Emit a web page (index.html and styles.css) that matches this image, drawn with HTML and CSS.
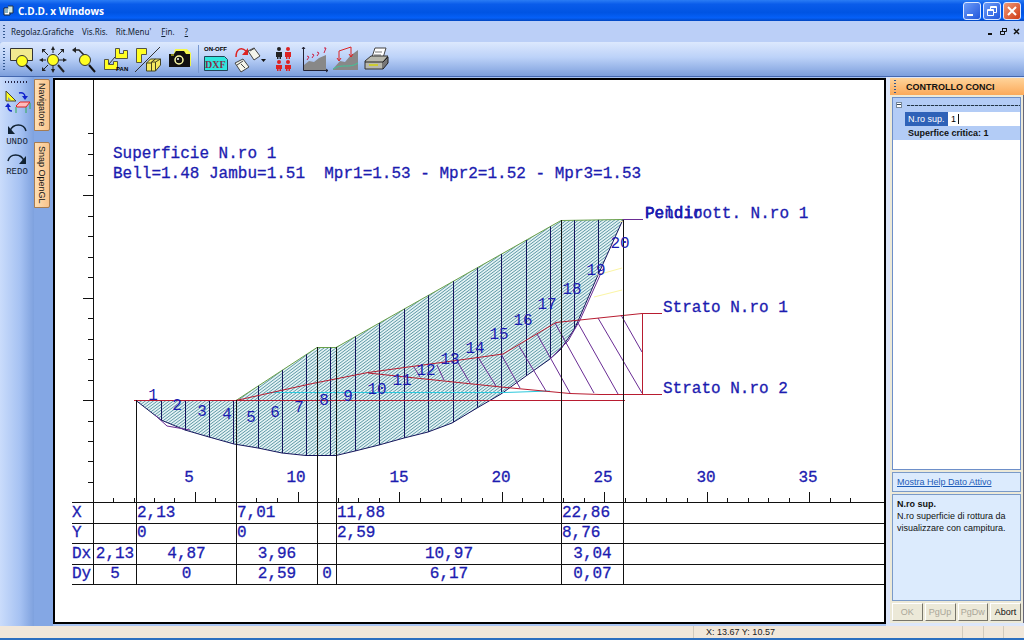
FILE: index.html
```html
<!DOCTYPE html>
<html lang="it">
<head>
<meta charset="utf-8">
<title>C.D.D. x Windows</title>
<link rel="stylesheet" href="styles.css">
</head>
<body>
<div class="app">
  <header class="titlebar">
    <svg class="app-icon" width="11" height="12" viewBox="0 0 11 12"><path d="M1 3h6v7H1z" fill="#fff" stroke="#123"/><path d="M5 1h5v7H6" fill="#cfe8e0" stroke="#234"/><path d="M2 5h3M2 7h3" stroke="#168"/></svg>
    <h1 class="title">C.D.D. x Windows</h1>
    <div class="window-buttons">
      <button class="win" aria-label="Riduci a icona"><svg width="16" height="16"><path d="M3 11h6v2H3z" fill="#fff"/></svg></button>
      <button class="win" aria-label="Ripristina"><svg width="16" height="16" fill="none" stroke="#fff"><path d="M6.500 6V3.500h6v6H10M6 4.500h6"/><path d="M3.500 6.500h6v6h-6zM3 7.500h6"/></svg></button>
      <button class="win close" aria-label="Chiudi"><svg width="16" height="16"><path d="M4 4l8 8M12 4l-8 8" stroke="#fff" stroke-width="2"/></svg></button>
    </div>
  </header>

  <nav class="menubar">
    <span class="grip"></span>
    <button class="menu">Regolaz.Grafiche</button>
    <button class="menu">Vis.Ris.</button>
    <button class="menu">Rit.Menu'</button>
    <button class="menu menu-wide"><u>F</u>in.</button>
    <button class="menu menu-wide"><u>?</u></button>
    <div class="mdi-buttons">
      <button class="mdi" aria-label="Riduci finestra"><svg width="9" height="9"><path d="M2 7h4" stroke="#111" stroke-width="2"/></svg></button>
      <button class="mdi" aria-label="Ripristina finestra"><svg width="9" height="9" fill="none" stroke="#111"><path d="M3.500 4V1.500h4v3H6M3 1.500h5M1.500 4.500h4v3h-4zM1 4.500h5"/></svg></button>
      <button class="mdi" aria-label="Chiudi finestra"><svg width="9" height="9"><path d="M2 2l5 5M7 2L2 7" stroke="#111" stroke-width="1.500"/></svg></button>
    </div>
  </nav>

  <div class="toolbar">
    <span class="grip"></span>
    <button class="tool" aria-label="Zoom finestra"><svg width="28" height="28" viewBox="0 0 28 28"><path d="M2.500 3.500h22v12h-22z" fill="#f2ea90" stroke="#333"/><path d="M18 20l6 6" stroke="#111" stroke-width="2"/><circle cx="14" cy="16" r="5.500" fill="#ff2" stroke="#333"/></svg></button>
    <button class="tool" aria-label="Zoom tutto"><svg width="28" height="28" viewBox="0 0 28 28"><g stroke="#222"><path d="M14 8V3M14 20v6M7 15H2M20 15h6M9 10L5 6M19 10l4-4M9 20l-4 4" fill="none"/><path d="M19 20l6 7" stroke-width="2"/></g><g fill="#222"><path d="M12 5l2-4 2 4zM12 24h4l-2 4zM4 13v4l-4-2zM24 13v4l4-2zM3 4h4l-4 4zM25 4h-4l4 4zM3 26v-4l4 4z"/></g><circle cx="14" cy="15" r="5.500" fill="#ff2" stroke="#333"/></svg></button>
    <button class="tool" aria-label="Zoom precedente"><svg width="28" height="28" viewBox="0 0 28 28"><path d="M5 5h4l5 5" fill="none" stroke="#222" stroke-width="1.500"/><path d="M6 2v6L2 5z" fill="#222"/><path d="M19 20l6 7" stroke="#111" stroke-width="2"/><circle cx="15" cy="15" r="5.500" fill="#ff2" stroke="#333"/></svg></button>
    <button class="tool" aria-label="Pan"><svg width="28" height="28" viewBox="0 0 28 28"><path d="M14.500 3.500h4v5h4v-3h4v8h-12zM3.500 14.500h4v5h5v-3h4v8h-13z" fill="#ff2" stroke="#554"/><path d="M8 19l6-7" stroke="#333"/><text class="pan-text" x="15" y="26">PAN</text></svg></button>
    <button class="tool tool-wide" aria-label="Pianta e assonometria"><svg width="30" height="28" viewBox="0 0 30 28"><path d="M4.500 3.500h10v6h-5v8h-5z" fill="#ff2" stroke="#554"/><path d="M3 27L28 2" stroke="#333"/><path d="M14.500 18l4-4h10v6l-5 6h-9zM14.500 18h5v8M19 18l4-4M23.500 26v-9h-4l4-3M23.500 17l5-3" fill="#f5ea60" stroke="#442"/></svg></button>
    <button class="tool tool-wide" aria-label="Fotografia"><svg width="28" height="28" viewBox="0 0 28 28"><path d="M9 4h12l4 4v13H5" fill="#ff2" opacity=".8"/><path d="M3 9h5l2-3h8l2 3h4v13H3z" fill="#111"/><circle cx="13" cy="15" r="4" fill="#111" stroke="#ffa" stroke-width="1.500"/><circle cx="12" cy="14" r="1" fill="#fff"/><path d="M5 10h3" stroke="#ff2"/></svg></button>
    <span class="separator"></span>
    <button class="tool" aria-label="DXF on-off"><svg width="28" height="30" viewBox="0 0 28 30"><text class="onoff-text" x="2" y="7">ON-OFF</text><path d="M2.500 12.500h20l3 3v11h-23z" fill="#2fe6dc" stroke="#245"/><text class="dxf-text" x="3" y="24">DXF</text></svg></button>
    <button class="tool tool-turn" aria-label="Ruota fogli"><svg width="34" height="28" viewBox="0 0 34 28"><path d="M3 12C3 3 9 2 13 6" fill="none" stroke="#d22" stroke-width="1.500"/><path d="M15 3v7H9z" fill="#d22"/><g fill="#f4f4ea" stroke="#444"><path d="M15 6l6-3 6 8-6 4z"/><path d="M17 6l5-3"/><path d="M2 18l8-4 6 8-8 5z"/><path d="M4 20l6-4M8 19l4 4"/></g><path d="M28 14h5l-2.500 3z" fill="#111"/></svg></button>
    <button class="tool" aria-label="Verifiche"><svg width="28" height="28" viewBox="0 0 28 28"><g fill="#222"><circle cx="9" cy="4" r="2"/><path d="M6 7h6v5h-1v2H9.500v-2h-1v2H7v-2H6z"/></g><g fill="#d22"><circle cx="18" cy="4" r="2"/><path d="M15 7h6v5h-1v2h-1.500v-2h-1v2H16v-2h-1z"/><circle cx="9" cy="17" r="2"/><path d="M6 20h6v4h-1v2H9.500v-2h-1v2H7v-2H6z"/><circle cx="18" cy="17" r="2"/><path d="M15 20h6v4h-1v2h-1.500v-2h-1v2H16v-2h-1z"/></g></svg></button>
    <button class="tool" aria-label="Profilo"><svg width="28" height="28" viewBox="0 0 28 28"><path d="M3 20l5-4 5 1 5-4 7-3v16H3z" fill="#888"/><path d="M2.500 2v23.500H27M1 4l1.500-2L4 4M25 24l2 1.500-2 1.500" fill="none" stroke="#223"/><path d="M6 11l2 1-2 3M11 9l2 1-2 3M16 7l2 1-2 3M23 3h2l-2 5" fill="none" stroke="#c24"/></svg></button>
    <button class="tool" aria-label="Superfici"><svg width="28" height="28" viewBox="0 0 28 28"><path d="M1 24l7-8 5 1 5-6 8-6v20H1z" fill="#888"/><path d="M1 24c9-6 16 0 25-6" fill="none" stroke="#3cc79a"/><path d="M7 15V6l12-4v10M5 13l2 3 2-3M17 9l2 3 2-3" fill="none" stroke="#d22"/></svg></button>
    <button class="tool" aria-label="Stampa"><svg width="28" height="28" viewBox="0 0 28 28"><path d="M9 12l3-9h11l-3 10z" fill="#fff" stroke="#444"/><path d="M12 7h7M11 10h7" stroke="#777"/><path d="M2 16l6-5h17l-5 6v7H2z" fill="#b8b8ae" stroke="#333"/><path d="M20 17l5-5v6l-5 6M2 17h18" fill="#777" stroke="#222"/><path d="M6 20h9" stroke="#cc3" stroke-width="2"/></svg></button>
  </div>

  <main class="work">
    <aside class="sidebar">
      <span class="grip-h"></span>
      <button class="side" aria-label="Disegno e tavolo"><svg width="28" height="28" viewBox="0 0 28 28"><path d="M3 2v10h10z" fill="#ff2" stroke="#443"/><path d="M5 8v3h3z" fill="#89a"/><path d="M16 4c4-1 6 1 6 4M9 22c-3 0-4-2-4-5" fill="none" stroke="#12c" stroke-width="1.500"/><path d="M19 7h6l-3 4zM2 18h6l-3-4z" fill="#12c"/><path d="M13 18v6M23 18v6M27 14v6" stroke="#3a5"/><path d="M13 17l4-4h10l-4 5h-9z" fill="#fbb" stroke="#d22"/></svg></button>
      <button class="side"><svg width="24" height="12" viewBox="0 0 24 12"><path d="M5 8c3-8 14-8 16 0" fill="none" stroke="#123" stroke-width="1.500"/><path d="M3 3v8h7z" fill="#123"/></svg><span>UNDO</span></button>
      <button class="side"><svg width="24" height="12" viewBox="0 0 24 12"><path d="M3 8c2-8 13-8 16 0" fill="none" stroke="#123" stroke-width="1.500"/><path d="M21 3v8h-7z" fill="#123"/></svg><span>REDO</span></button>
    </aside>
    <div class="tabs">
      <button class="tab tab-short">Navigatore</button>
      <button class="tab">Snap OpenGL</button>
    </div>

    <section class="canvas">
      <svg class="plot" role="img" aria-label="Sezione del pendio">
        <defs>
          <pattern id="hatch" width="4" height="3" patternUnits="userSpaceOnUse"><path d="M0 0h4v3H0z" fill="#e4f2f5"/><path d="M-1 3.750L5 -.750M-1 .750L1 -.750M3 3.750L5 2.250" stroke="#5c98a4"/></pattern>
          <clipPath id="mass"><path d="M136 400.500H236L317 347.500H336L561 220.500L623 219.500L598 275L575 328L561 349L550 359L526 376L501 394L477 408L452 423L428 432L404 438L379 445L355 451L336 455L306 455L282 453L258 448L234 444L209 437L185 430L161 420Z"/></clipPath>
        </defs>
        <g transform="translate(-55 -80)" fill="none">
          <path class="black" d="M93.500 80V502"/>
          <path class="black" d="M88 133.500h5M88 154.500h5M88 175.500h5M83 195.500h10M88 216.500h5M88 236.500h5M88 257.500h5M88 277.500h5M83 298.500h10M88 318.500h5M88 339.500h5M88 359.500h5M88 380.500h5M83 400.500h10M88 421.500h5M88 441.500h5M88 461.500h5M88 482.500h5"/>
          <path class="black" d="M113.500 502v-4M134.500 502v-4M154.500 502v-4M174.500 502v-4M195.500 502v-10M215.500 502v-4M256.500 502v-4M277.500 502v-4M298.500 502v-10M338.500 502v-4M358.500 502v-4M379.500 502v-4M399.500 502v-10M420.500 502v-4M441.500 502v-4M461.500 502v-4M482.500 502v-4M502.500 502v-10M522.500 502v-4M543.500 502v-4M563.500 502v-4M584.500 502v-4M604.500 502v-10M625.500 502v-4M646.500 502v-4M666.500 502v-4M687.500 502v-4M707.500 502v-10M727.500 502v-4M748.500 502v-4M768.500 502v-4M789.500 502v-4M809.500 502v-10M830.500 502v-4M850.500 502v-4"/>
          <path d="M136 400.500H236L317 347.500H336L561 220.500L623 219.500L598 275L575 328L561 349L550 359L526 376L501 394L477 408L452 423L428 432L404 438L379 445L355 451L336 455L306 455L282 453L258 448L234 444L209 437L185 430L161 420Z" fill="url(#hatch)"/>
          <path class="green" d="M236 400.500L317 347.500H336L561 220.500L623 219.500"/>
          <path class="navy" d="M623 219.500L598 275L575 328L561 349L550 359L526 376L501 394L477 408L452 423L428 432L404 438L379 445L355 451L336 455.500H306L282 453L258 448L234 444L209 437L185 430L161 420L136 400.500"/>
          <path class="violet" d="M155 415L167 426L190 430M550 359L568 341L580 320L601 273"/>
          <path class="navy" clip-path="url(#mass)" d="M161.500 200V460M185.500 200V460M209.500 200V460M233.500 200V460M258.500 200V460M282.500 200V460M306.500 200V460M330.500 200V460M355.500 200V460M379.500 200V460M404.500 200V460M428.500 200V460M453.500 200V460M477.500 200V460M501.500 200V460M526.500 200V460M550.500 200V460M574.500 200V460M598.500 200V460"/>
          <path class="cyan" d="M267 392.500H505L550 391"/>
          <path class="yellow" d="M597 275L622 268M594 297L622 290M620 222l3-1"/>
          <path class="violet" d="M598 318L642 393M621 315L642 352M578 323L618 394M555 323L594 393M537 334L570 393M519 346L546 391M501 354L520 388M478 357L496 386M457 361L470 383M437 365L444 380M414 367L420 377"/>
          <path class="red" d="M134 400.500H625"/>
          <path class="red" d="M236 400.500L310 384L368 372.500L478 357.500L503 354L556 322.500L642 313.500H662M642.500 313V395M368 373L501 387L570 393.500L600 394.500H662"/>
          <path class="black" d="M136.500 400V502M236.500 400V502M317.500 347V502M336.500 347V502M561.500 220V502M623.500 219V502"/>
          <path class="violet" d="M623 219.500H643"/>
          <g class="label strong">
            <text x="113" y="158">Superficie N.ro 1</text>
            <text x="113" y="178" xml:space="preserve">Bell=1.48 Jambu=1.51  Mpr1=1.53 - Mpr2=1.52 - Mpr3=1.53</text>
            <text x="645" y="218">Pendio</text>
            <text x="645" y="218">Peldirott. N.ro 1</text>
            <text x="663" y="312">Strato N.ro 1</text>
            <text x="663" y="393">Strato N.ro 2</text>
          </g>
          <g class="label centered strong">
            <text x="189" y="482">5</text><text x="296" y="482">10</text><text x="399" y="482">15</text><text x="501" y="482">20</text><text x="603" y="482">25</text><text x="706" y="482">30</text><text x="808" y="482">35</text>
          </g>
          <g class="label centered">
            <text x="153" y="400">1</text><text x="177" y="410">2</text><text x="202" y="416">3</text><text x="227" y="419">4</text><text x="251" y="422">5</text><text x="275" y="417">6</text><text x="299" y="412">7</text><text x="324" y="405">8</text><text x="348" y="401">9</text><text x="377" y="394">10</text><text x="402" y="385">11</text><text x="426" y="375">12</text><text x="450" y="364">13</text><text x="475" y="353">14</text><text x="499" y="339">15</text><text x="523" y="325">16</text><text x="547" y="309">17</text><text x="572" y="294">18</text><text x="596" y="275">19</text><text x="620" y="248">20</text>
          </g>
        </g>
      </svg>
      <table class="data">
        <colgroup><col class="c-head"><col class="c-a"><col class="c-b"><col class="c-c"><col class="c-d"><col class="c-e"><col class="c-f"><col></colgroup>
        <tbody>
          <tr class="tall"><th scope="row">X</th><td></td><td>2,13</td><td>7,01</td><td></td><td>11,88</td><td>22,86</td><td></td></tr>
          <tr><th scope="row">Y</th><td></td><td>0</td><td>0</td><td></td><td>2,59</td><td>8,76</td><td></td></tr>
          <tr class="tall delta"><th scope="row">Dx</th><td>2,13</td><td>4,87</td><td>3,96</td><td></td><td>10,97</td><td>3,04</td><td></td></tr>
          <tr class="delta"><th scope="row">Dy</th><td>5</td><td>0</td><td>2,59</td><td>0</td><td>6,17</td><td>0,07</td><td></td></tr>
        </tbody>
      </table>
    </section>

    <aside class="panel">
      <h2 class="panel-title"><span class="grip"></span>CONTROLLO CONCI</h2>
      <div class="panel-body">
        <div class="props">
          <div class="prop-head"><button class="toggle" aria-label="Comprimi"></button><span class="dashes"></span></div>
          <div class="prop-row"><label for="nsup">N.ro sup.</label><input id="nsup" type="text" value="1"><span class="caret"></span></div>
          <div class="prop-info">Superfice critica: 1</div>
        </div>
        <div class="help-link"><a href="#aiuto">Mostra Help Dato Attivo</a></div>
        <div class="help" id="aiuto"><h3>N.ro sup.</h3><p>N.ro superficie di rottura da visualizzare con campitura.</p></div>
        <div class="actions"><button disabled>OK</button><button disabled>PgUp</button><button disabled>PgDw</button><button>Abort</button></div>
      </div>
    </aside>
  </main>

  <footer class="status"><span class="status-left"></span><span class="status-pos">X: 13.67 Y: 10.57</span><span class="cell"></span><span class="cell"></span><span class="cell"></span></footer>
</div>
</body>
</html>
```
FILE: styles.css
```css
* { box-sizing: border-box; }
body {
  margin: 0;
  font-family: "Liberation Sans", Arial, sans-serif;
  font-size: 9px;
  color: #111;
}
button { border: 0; padding: 0; background: none; font: inherit; color: inherit; }
svg { display: block; flex: none; }
h1, h2, h3, p { margin: 0; }
.app { display: flex; flex-direction: column; min-height: 100vh; background: #a9c4f2; }

.titlebar {
  display: flex; align-items: center; gap: 4px; height: 21px; padding: 0 3px;
  background: linear-gradient(#2a7cf5, #0a5cea 20%, #0054e3 60%, #0560f8 85%, #0146c0);
}
.title { flex: 1; color: #fff; font: bold 10px/20px "Open Sans", "Noto Sans", sans-serif; }
.window-buttons { display: flex; gap: 2px; }
.win { width: 18px; height: 18px; border: 1px solid #dce8ff; border-radius: 3px; background: linear-gradient(135deg, #6c9cf8, #2257dc); }
.close { background: linear-gradient(135deg, #f09a78, #cf3a14); }

.menubar { display: flex; align-items: center; gap: 8px; height: 21px; padding: 0 3px; background: #bbcff7; }
.menu { font: 8px/20px "Noto Sans", sans-serif; color: #123; }
.menu-wide { margin-left: 2px; }
.mdi-buttons { display: flex; gap: 4px; margin-left: auto; }
.grip { width: 2px; height: 13px; background: repeating-linear-gradient(#34588f 0 1px, transparent 1px 3px); }
.menubar .grip { margin-right: -2px; }

.toolbar {
  display: flex; align-items: center; gap: 3px; height: 35px; padding: 0 3px;
  background: linear-gradient(#dce8fd, #bcd2f8 45%, #7d9fdc); border-bottom: 1px solid #4468b0; border-radius: 3px 0 0 0;
}
.toolbar .grip { height: 22px; }
.tool { display: flex; justify-content: center; width: 28px; }
.tool-wide { width: 30px; }
.tool-turn { width: 34px; }
.separator { width: 1px; height: 28px; background: #7797cf; }
.pan-text { font: bold 6px "Liberation Sans", sans-serif; }
.onoff-text { font: bold 6px "Liberation Sans", sans-serif; }
.dxf-text { font: bold 10px "Liberation Serif", serif; fill: #813048; }

.work { display: flex; flex: 1; }
.sidebar {
  display: flex; flex-direction: column; align-items: center; gap: 6px; width: 34px; padding: 4px 0;
  background: linear-gradient(90deg, #cadcfb, #a5c1f2 60%, #7ea1de);
}
.grip-h { width: 24px; height: 2px; background: repeating-linear-gradient(90deg, #224 0 1px, transparent 1px 3px); }
.side { display: flex; flex-direction: column; align-items: center; gap: 2px; font: 9px/10px "Liberation Mono", monospace; color: #123; }
.tabs { display: flex; flex-direction: column; gap: 11px; width: 19px; padding: 2px 3px 0 0; background: #84a7e4; }
.tab {
  writing-mode: vertical-rl; width: 16px; height: 66px; padding: 3px 0; text-align: left; font-size: 9px; line-height: 14px; white-space: nowrap;
  background: linear-gradient(90deg, #ffdfb4, #f9c48c); border: 1px solid #a67c52; border-radius: 0 2px 2px 0;
}
.tab-short { height: 52px; }

.canvas { flex: 1; display: flex; flex-direction: column; min-width: 0; margin: 1px 0 2px; background: #fff; border: 2px solid #000; }
.plot { width: 100%; height: 422px; }
.black { stroke: #111; }
.navy { stroke: #15155c; }
.green { stroke: #6aa04a; }
.violet { stroke: #6a2c94; }
.cyan { stroke: #2cc8dc; }
.yellow { stroke: #fbf5a4; }
.red { stroke: #b81c30; }
.label, .data { font: 16px/20px "Liberation Mono", "Courier New", monospace; }
.label { fill: #1c1cb0; }
.strong { stroke: #1c1cb0; stroke-width: .3; }
.centered { text-anchor: middle; }

.data { table-layout: fixed; width: calc(100% - 17px); margin-left: 17px; border-spacing: 0; border-bottom: 1px solid #111; color: #1c1cb0; -webkit-text-stroke: .3px #1c1cb0; }
.data th, .data td { height: 20px; padding: 0; border-top: 1px solid #111; text-align: left; font-weight: normal; line-height: 19px; }
.data .tall th, .data .tall td { height: 21px; }
.data td { border-left: 1px solid #111; }
.data .delta td { text-align: center; }
.c-head { width: 21px; }
.c-a { width: 43px; }
.c-b { width: 100px; }
.c-c { width: 81px; }
.c-d { width: 19px; }
.c-e { width: 225px; }
.c-f { width: 62px; }

.panel { display: flex; flex-direction: column; width: 138px; padding: 1px 0 3px 4px; background: #dce6fa; }
.panel-title { display: flex; align-items: center; gap: 10px; height: 17px; padding-left: 4px; font-size: 9px; background: linear-gradient(#ffd49a, #fba95a); }
.panel-body { flex: 1; display: flex; flex-direction: column; gap: 2px; padding: 2px; background: #ece9d8; border-right: 1px solid #667; }
.props { flex: 1; background: #fff; border: 1px solid #6d8fc9; }
.prop-head { display: flex; align-items: center; gap: 5px; height: 14px; padding-left: 3px; background: #b3ccf6; }
.toggle { width: 6px; height: 6px; border: 1px solid #789; background: linear-gradient(#fff 1px, #345 1px 2px, #fff 2px); }
.dashes { flex: 1; height: 1px; background: repeating-linear-gradient(90deg, #234 0 3px, #8ac 3px 4px); }
.prop-row { display: flex; height: 14px; padding-left: 12px; align-items: stretch; background: linear-gradient(90deg, #b3ccf6 12px, #fff 12px); }
.prop-row label { width: 43px; padding-left: 3px; line-height: 14px; color: #fff; background: #2f62b8; }
.prop-row input { width: 7px; margin-left: 3px; padding: 0; border: 0; font: inherit; background: none; outline: 0; }
.caret { width: 1px; margin: 2px 0; background: #111; }
.prop-info { padding-left: 15px; font-weight: bold; line-height: 14px; background: #b3ccf6; }
.help-link { height: 20px; padding: 0 4px; line-height: 18px; background: #dcebfd; border: 1px solid #7a9ac8; }
.help-link a { color: #1c5cb8; }
.help { height: 107px; padding: 3px 4px; line-height: 12px; background: #dcebfd; border: 1px solid #7a9ac8; }
.help h3, .help p { font-size: 9px; }
.actions { display: flex; gap: 2px; }
.actions button { flex: 1; height: 18px; background: #ece9d8; border: 1px solid; border-color: #fff #77756a #77756a #fff; }
.actions button:disabled { color: #aaa799; }

.status { display: flex; align-items: center; height: 14px; background: #f1e7da; border-bottom: 2px solid #2c6fc0; color: #222; }
.status-left { flex: 704; }
.status-pos { flex: 260; padding-left: 12px; line-height: 12px; border-left: 1px solid #d2cabc; }
.cell { flex: 20; height: 12px; border-left: 1px solid #d2cabc; }
```
